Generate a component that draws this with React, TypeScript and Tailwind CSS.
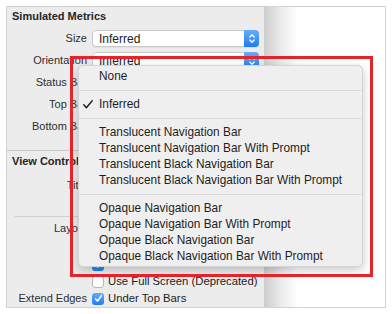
import React from 'react';

const MENU: (string | null)[] = [
  'None',
  null,
  'Inferred',
  null,
  'Translucent Navigation Bar',
  'Translucent Navigation Bar With Prompt',
  'Translucent Black Navigation Bar',
  'Translucent Black Navigation Bar With Prompt',
  null,
  'Opaque Navigation Bar',
  'Opaque Navigation Bar With Prompt',
  'Opaque Black Navigation Bar',
  'Opaque Black Navigation Bar With Prompt',
];

function Stepper() {
  return (
    <div className="w-[15px] h-[17px] -my-px -mr-px rounded-r-[4px] bg-gradient-to-b from-[#62adfb] to-[#1c7cf4] flex items-center justify-center">
      <svg width="8" height="11" viewBox="0 0 8 11" fill="none" stroke="white" strokeWidth="1.3" strokeLinecap="round" strokeLinejoin="round">
        <path d="M1.8 4 L4 1.7 L6.2 4" />
        <path d="M1.8 7 L4 9.3 L6.2 7" />
      </svg>
    </div>
  );
}

function Popup({ value }: { value: string }) {
  return (
    <div className="w-[167px] h-[17px] bg-white border border-[#cacaca] rounded-[4px] shadow-[0_1px_1px_rgba(0,0,0,0.06)] flex items-center">
      <span className="flex-1 pl-[6px] pt-px text-[12px] leading-none text-[#222]">{value}</span>
      <Stepper />
    </div>
  );
}

function Checkbox({ checked }: { checked?: boolean }) {
  if (checked) {
    return (
      <div className="w-[12px] h-[12px] rounded-[3px] bg-gradient-to-b from-[#62adfb] to-[#1c7cf4] flex items-center justify-center">
        <svg width="9" height="9" viewBox="0 0 9 9" fill="none" stroke="white" strokeWidth="1.5" strokeLinecap="round" strokeLinejoin="round">
          <path d="M1.6 4.9 L3.6 7 L7.4 1.6" />
        </svg>
      </div>
    );
  }
  return <div className="w-[12px] h-[12px] rounded-[3px] bg-white border border-[#b8b8b8]" />;
}

function Row({ label, children }: { label?: string; children?: React.ReactNode }) {
  return (
    <div className="h-[22px] flex items-center">
      <div className="w-[80px] shrink-0 pt-px text-right text-[11px] leading-none text-[#2e2e2e] whitespace-nowrap">{label}</div>
      <div className="ml-[5px]">{children}</div>
    </div>
  );
}

function CheckRow({ label, text, checked }: { label?: string; text?: string; checked?: boolean }) {
  return (
    <div className="h-[17px] flex items-center">
      <div className="w-[80px] shrink-0 text-right text-[11px] leading-none text-[#2e2e2e] whitespace-nowrap">{label}</div>
      <div className="ml-[5px] flex items-center gap-[4px]">
        <Checkbox checked={checked} />
        {text && <span className="text-[11.3px] leading-none text-[#222] whitespace-nowrap">{text}</span>}
      </div>
    </div>
  );
}

export default function App() {
  return (
    <div className="relative w-[392px] h-[314px] bg-white overflow-hidden pt-[6px] pl-[6px] font-['Liberation_Sans',Arial,sans-serif]">
      <div className="w-[380px] h-[302px] border border-[#d2d2d2] flex">
        {/* Inspector */}
        <div className="w-[257px] shrink-0 bg-[#ececec] flex flex-col overflow-hidden">
          <div className="h-[20px] pt-[2px] pl-[5px] text-[11px] leading-[14px] font-bold text-[#262626]">Simulated Metrics</div>
          <Row label="Size"><Popup value="Inferred" /></Row>
          <Row label="Orientation"><Popup value="Inferred" /></Row>
          <Row label="Status Bar"><Popup value="Inferred" /></Row>
          <Row label="Top Bar"><Popup value="Inferred" /></Row>
          <Row label="Bottom Bar"><Popup value="Inferred" /></Row>
          <div className="mt-[13px] h-px bg-[#cbcbcb]" />
          <div className="h-[23px] pt-[3px] pl-[5px] text-[11px] leading-[14px] font-bold text-[#262626]">View Controller</div>
          <Row label="Title"><Popup value="" /></Row>
          <div className="h-[20px]" />
          <div className="ml-[8px] h-px bg-[#d0d0d0]" />
          <Row label="Layout">
            <div className="flex items-center gap-[4px]">
              <Checkbox checked />
              <span className="text-[11.3px] leading-none text-[#222]">Adjust Scroll View Insets</span>
            </div>
          </Row>
          <CheckRow text="Hide Bottom Bar on Push" checked />
          <CheckRow checked />
          <CheckRow text="Use Full Screen (Deprecated)" />
          <CheckRow label="Extend Edges" text="Under Top Bars" checked />
        </div>
        {/* Canvas */}
        <div className="flex-1 bg-white flex">
          <div className="w-[34px] bg-gradient-to-r from-[#cdcdcd] via-[#ebebeb] to-white" />
        </div>
      </div>

      {/* Pop-up menu */}
      <div className="absolute left-[78px] top-[65px] w-[285px] h-[202px] rounded-[5px] bg-[#efefef] border border-[#d5d5d5] shadow-[0_3px_10px_rgba(0,0,0,0.22)] pt-[2px]">
        {MENU.map((item, i) =>
          item === null ? (
            <div key={i} className="h-[12px] flex items-center">
              <div className="h-px w-full bg-[#d9d9d9]" />
            </div>
          ) : (
            <div key={i} className="h-[16px] flex items-center">
              <div className="w-[20px] shrink-0 pl-[4px] flex items-center">
                {item === 'Inferred' && (
                  <svg width="10" height="9" viewBox="0 0 10 9" fill="none" stroke="#1e1e1e" strokeWidth="1.4" strokeLinecap="round" strokeLinejoin="round">
                    <path d="M0.8 4.8 L3.4 7.8 L9.2 0.8" />
                  </svg>
                )}
              </div>
              <span className="pt-[2px] text-[11.85px] leading-none text-[#1e1e1e] whitespace-nowrap">{item}</span>
            </div>
          )
        )}
      </div>

      {/* Highlight */}
      <div className="absolute left-[70px] top-[56px] w-[303px] h-[221px] border-[3px] border-[#e5232b]" />
    </div>
  );
}
